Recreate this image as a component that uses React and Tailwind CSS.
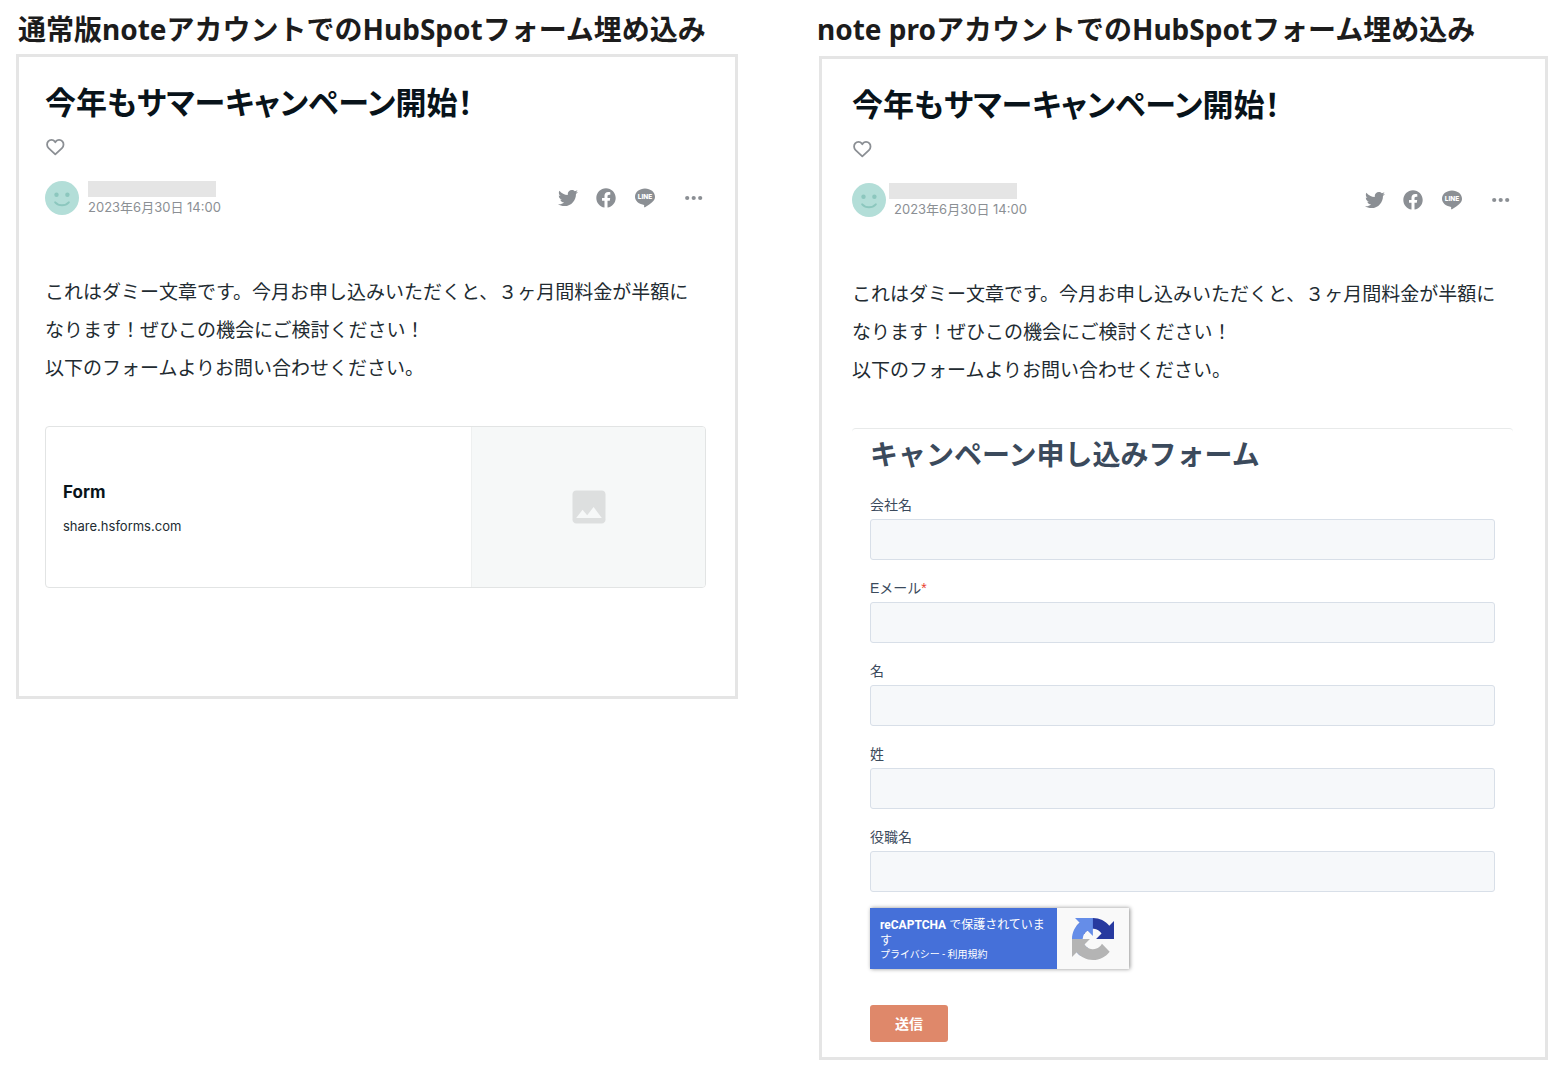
import { FaFacebook, FaTwitter } from 'react-icons/fa'
import { MdImage } from 'react-icons/md'

const fields = [
  { id: 'company', label: '会社名', type: 'text' },
  { id: 'email', label: 'Eメール', type: 'email', required: true },
  { id: 'firstname', label: '名', type: 'text' },
  { id: 'lastname', label: '姓', type: 'text' },
  { id: 'jobtitle', label: '役職名', type: 'text' },
]

function HeartIcon() {
  return (
    <svg viewBox="0 0 20 20" className="size-5" fill="none" stroke="currentColor" strokeWidth="1.8" strokeLinejoin="round">
      <path d="M10.3 17.4 3.6 11.2C1.7 9.4 1.6 6.2 3.2 4.4 5 2.4 8.2 2.5 9.7 4.4l.6.8.6-.8c1.5-1.9 4.7-2 6.5 0 1.6 1.800 1.500 5-.4 6.800z" />
    </svg>
  )
}

function Avatar() {
  return (
    <svg viewBox="0 0 34 34" className="size-[34px] shrink-0">
      <circle cx="17" cy="17" r="17" fill="#b3ded8" />
      <circle cx="11.5" cy="13.7" r="2.2" fill="#8cc7be" />
      <circle cx="22.4" cy="13.7" r="2.2" fill="#8cc7be" />
      <path d="M10.2 21.3c3.6 4 10 4 13.6 0" fill="none" stroke="#8cc7be" strokeWidth="2" strokeLinecap="round" />
    </svg>
  )
}

function LineIcon() {
  return (
    <svg viewBox="0 0 20 20" className="size-5">
      <path d="M10 .6C4.5.6 0 4.2 0 8.7c0 4 3.6 7.3 8.4 8 .9.2.9.7.7 1.7-.1.6 0 1.2.9.8 2.2-1 6.4-3.9 8.3-6.1C19.5 11.7 20 10.3 20 8.7 20 4.2 15.5.6 10 .6z" fill="#8b8f94" />
      <text x="10" y="11" textAnchor="middle" fontSize="6.5" fontWeight="800" fill="#fff" className="font-[Inter,sans-serif]">LINE</text>
    </svg>
  )
}

function MoreIcon() {
  return (
    <svg viewBox="0 0 20 20" className="size-5" fill="currentColor">
      <circle cx="3.2" cy="10" r="2.1" />
      <circle cx="9.7" cy="10" r="2.1" />
      <circle cx="16.2" cy="10" r="2.1" />
    </svg>
  )
}

function RecaptchaLogo() {
  return (
    <svg viewBox="0 0 64 64" className="size-[42px]">
      <path fill="#27399f" d="M64 31.955l-.033-1.37V4.687l-7.16 7.16C50.948 4.674 42.033.093 32.05.093c-10.4 0-19.622 4.96-25.458 12.64l11.736 11.86a15.55 15.55 0 0 1 4.754-5.334c2.05-1.6 4.952-2.906 8.968-2.906.485 0 .86.057 1.135.163 4.976.393 9.288 3.14 11.828 7.124l-8.307 8.307L64 31.953" />
      <path fill="#658de8" d="M31.862.094l-1.37.033H4.594l7.16 7.16C4.58 13.147 0 22.06 0 32.046c0 10.4 4.96 19.622 12.64 25.458L24.5 45.768a15.55 15.55 0 0 1-5.334-4.754c-1.6-2.05-2.906-4.952-2.906-8.968 0-.485.057-.86.163-1.135.393-4.976 3.14-9.288 7.124-11.828l8.307 8.307L31.86.095" />
      <path fill="#b4b4b4" d="M.001 32.045l.033 1.37v25.898l7.16-7.16c5.86 7.173 14.774 11.754 24.76 11.754 10.4 0 19.622-4.96 25.458-12.64l-11.736-11.86a15.55 15.55 0 0 1-4.754 5.334c-2.05 1.6-4.952 2.906-8.968 2.906-.485 0-.86-.057-1.135-.163-4.976-.393-9.288-3.14-11.828-7.124l8.307-8.307c-10.522.04-22.4.066-27.295-.005" />
    </svg>
  )
}

// 記事の見出し・投稿者・本文（両バージョン共通）
function Article({ metaClass, dateClass }) {
  return (
    <>
      <h2 className="text-[31px] leading-12 font-bold text-[#08131a] [font-feature-settings:'palt']">今年もサマーキャンペーン開始！</h2>
      <button type="button" aria-label="スキ" className="mt-2.5 block text-[#8b8f94]">
        <HeartIcon />
      </button>
      <div className="mt-6 flex items-center">
        <Avatar />
        <div className={metaClass}>
          <div className="h-4 w-32 bg-[#e5e5e5]" />
          <time dateTime="2023-06-30T14:00" className={dateClass}>2023年6月30日 14:00</time>
        </div>
        <div className="ml-auto flex items-center text-[#8b8f94]">
          <a href="#twitter" aria-label="Twitter"><FaTwitter className="size-5" /></a>
          <a href="#facebook" aria-label="Facebook" className="ml-[18px]"><FaFacebook className="size-5" /></a>
          <a href="#line" aria-label="LINE" className="ml-[19px]"><LineIcon /></a>
          <button type="button" aria-label="その他" className="mr-0.5 ml-[29px]"><MoreIcon /></button>
        </div>
      </div>
      <div className="mt-[59px] text-[19px] leading-[38px] text-[#222b31]">
        <p>これはダミー文章です。今月お申し込みいただくと、３ヶ月間料金が半額になります！ぜひこの機会にご検討ください！</p>
        <p>以下のフォームよりお問い合わせください。</p>
      </div>
    </>
  )
}

function LinkCard() {
  return (
    <a href="#form" className="mt-[38px] flex h-[162px] overflow-hidden rounded border border-[#e2e4e4]">
      <div className="flex flex-1 flex-col justify-center pt-0.5 pl-[17px]">
        <span className="text-[17px] leading-6 font-bold text-[#08131a]">Form</span>
        <span className="mt-3 text-[13px] leading-5 text-[#222b31]">share.hsforms.com</span>
      </div>
      <div className="flex w-[234px] items-center justify-center border-l border-[#eef0f0] bg-[#f6f8f8]">
        <MdImage className="size-11 text-[#dddfdf]" />
      </div>
    </a>
  )
}

function Recaptcha() {
  return (
    <div className="mt-4 flex h-[61px] w-[259px] shadow-[1px_0_4px_#909090]">
      <div className="w-[187px] bg-[#4570d9] px-2.5 pt-[9px] font-[Roboto,'Noto_Sans_CJK_JP',sans-serif] text-white">
        <p className="text-xs leading-4 whitespace-nowrap">
          <strong>reCAPTCHA</strong> で保護されていま<br />す
        </p>
        <p className="text-[10px] leading-3">
          <a href="#privacy">プライバシー</a> - <a href="#terms">利用規約</a>
        </p>
      </div>
      <div className="flex flex-1 items-center justify-center bg-[#f9f9f9]">
        <RecaptchaLogo />
      </div>
    </div>
  )
}

function CampaignForm() {
  return (
    <form className="mt-[38px] rounded-t border-t border-[#e8eaea] px-[18px] pt-1.5 text-[#3b4a5c]" onSubmit={e => e.preventDefault()}>
      <h3 className="text-[28px] leading-10 font-bold">キャンペーン申し込みフォーム</h3>
      <div className="mt-5 flex flex-col gap-[18px]">
        {fields.map(f => (
          <div key={f.id}>
            <label htmlFor={f.id} className="block font-['Liberation_Sans','Noto_Sans_CJK_JP',sans-serif] text-sm leading-5">
              {f.label}
              {f.required && <span className="text-[#e8402f]">*</span>}
            </label>
            <input id={f.id} type={f.type} required={f.required}
              className="mt-1 block h-[41px] w-full rounded-[3px] border border-[#d8dfe8] bg-[#f6f8fa] px-2.5 text-base" />
          </div>
        ))}
      </div>
      <Recaptcha />
      <button type="submit" className="mt-9 block h-[37px] w-[78px] rounded-[3px] bg-[#df886a] text-sm font-bold text-white">
        送信
      </button>
    </form>
  )
}

export default function App() {
  return (
    <main className="grid grid-cols-[722fr_729fr] items-start gap-x-[81px] bg-white pt-1.5 pr-[18px] pb-[18px] pl-4 font-[Inter,'Noto_Sans_CJK_JP',sans-serif]">
      <section>
        <h1 className="pl-0.5 font-['Noto_Sans','Noto_Sans_CJK_JP',sans-serif] text-[28px] leading-[46px] font-bold whitespace-nowrap text-[#1c1c1c]">
          通常版noteアカウントでのHubSpotフォーム埋め込み
        </h1>
        <div className="mt-0.5 border-3 border-[#e5e5e5] pt-[22px] pr-[29px] pb-[108px] pl-[26px]">
          <Article metaClass="ml-[9px] flex flex-col gap-0.5" dateClass="text-[13px] leading-4 text-[#8b8f94]" />
          <LinkCard />
        </div>
      </section>
      <section>
        <h1 className="-ml-0.5 font-['Noto_Sans','Noto_Sans_CJK_JP',sans-serif] text-[28px] leading-[46px] font-bold whitespace-nowrap text-[#1c1c1c]">
          note proアカウントでのHubSpotフォーム埋め込み
        </h1>
        <div className="mt-1 border-3 border-[#e5e5e5] pt-[22px] pr-8 pb-[15px] pl-[30px]">
          <Article metaClass="ml-[3px] flex flex-col gap-0.5" dateClass="pl-[5px] text-[13px] leading-4 text-[#8b8f94]" />
          <CampaignForm />
        </div>
      </section>
    </main>
  )
}
